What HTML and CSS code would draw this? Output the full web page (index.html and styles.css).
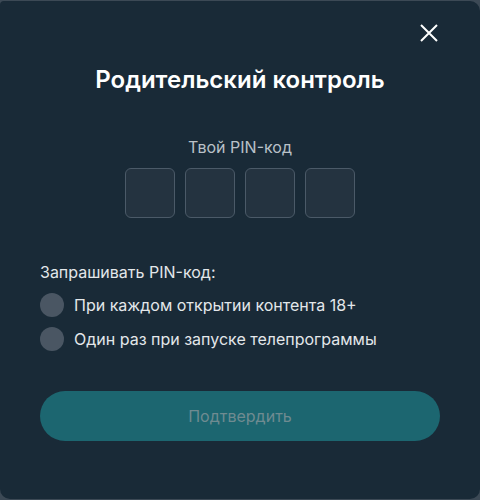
FILE: index.html
```html
<!DOCTYPE html>
<html lang="ru">
<head>
<meta charset="utf-8">
<link rel="stylesheet" href="styles.css">
</head>
<body>
<div class="modal">
  <button class="close" aria-label="Закрыть">
    <svg width="18" height="18" viewBox="0 0 18 18"><path d="M1 1L17 17M17 1L1 17" stroke="#fff" stroke-width="2" fill="none"/></svg>
  </button>
  <h1 class="title">Родительский контроль</h1>
  <div class="pin-label">Твой PIN-код</div>
  <div class="pin-row">
    <div class="pin-box"></div>
    <div class="pin-box"></div>
    <div class="pin-box"></div>
    <div class="pin-box"></div>
  </div>
  <div class="ask">Запрашивать PIN-код:</div>
  <div class="options">
    <div class="option"><span class="radio"></span><span>При каждом открытии контента 18+</span></div>
    <div class="option"><span class="radio"></span><span>Один раз при запуске телепрограммы</span></div>
  </div>
  <button class="confirm">Подтвердить</button>
</div>
</body>
</html>
```
FILE: styles.css
```css
html, body {
  margin: 0;
  padding: 0;
  background: #3c4955;
  width: 480px;
  height: 500px;
  overflow: hidden;
}
body {
  font-family: Inter, "Noto Sans", sans-serif;
  padding-top: 1px;
  box-sizing: border-box;
}
.modal {
  position: relative;
  width: 480px;
  height: 498px;
  background: #192a37;
  border-radius: 4px 10px 10px 10px;
  box-sizing: border-box;
  padding: 63px 40px 0;
  display: flex;
  flex-direction: column;
}
.close {
  position: absolute;
  top: 23px;
  right: 42px;
  width: 18px;
  height: 18px;
  padding: 0;
  border: 0;
  background: none;
  display: block;
}
.close svg { display: block; }
.title {
  margin: 0;
  text-align: center;
  color: #fff;
  font-size: 24px;
  font-weight: 600;
  line-height: 32px;
}
.pin-label {
  margin-top: 41px;
  text-align: center;
  color: #b9c1c8;
  font-size: 16px;
  line-height: 20px;
}
.pin-row {
  margin-top: 11px;
  display: flex;
  justify-content: center;
  gap: 10px;
}
.pin-box {
  width: 50px;
  height: 50px;
  box-sizing: border-box;
  background: #243340;
  border: 1px solid #4b5a68;
  border-radius: 6px;
}
.ask {
  margin-top: 44px;
  color: #e3e7ea;
  font-size: 16px;
  line-height: 20px;
}
.options {
  margin-top: 11px;
  display: flex;
  flex-direction: column;
  gap: 10px;
}
.option {
  display: flex;
  align-items: center;
  gap: 10px;
  color: #e3e7ea;
  font-size: 16px;
  line-height: 24px;
}
.radio {
  width: 24px;
  height: 24px;
  border-radius: 50%;
  background: #4a5663;
  flex: none;
}
.confirm {
  margin-top: 40px;
  height: 50px;
  border: 0;
  border-radius: 25px;
  background: #1c6670;
  color: #6f8b91;
  font-family: Inter, "Noto Sans", sans-serif;
  font-size: 16px;
}
```
